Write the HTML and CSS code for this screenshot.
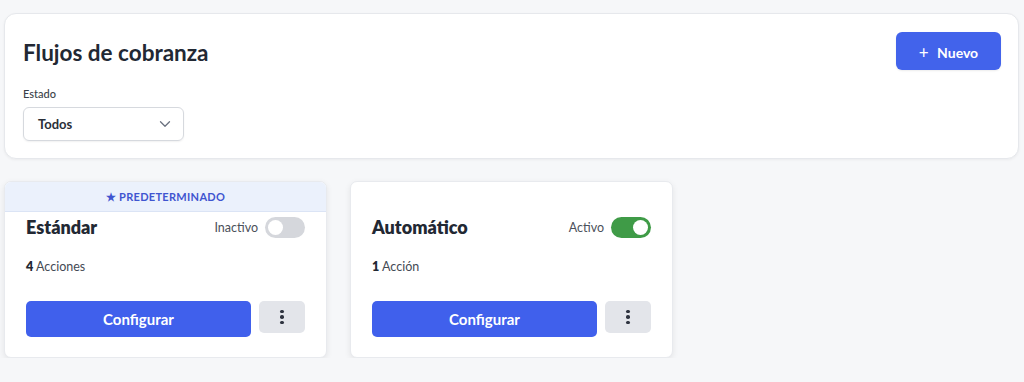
FILE: index.html
```html
<!DOCTYPE html>
<html lang="es">
<head>
<meta charset="utf-8">
<title>Flujos de cobranza</title>
<link rel="stylesheet" href="styles.css">
</head>
<body>
<div class="page">
  <section class="panel">
    <div class="panel-head">
      <h1 class="title">Flujos de cobranza</h1>
      <button class="btn-new"><span class="plus">+</span> Nuevo</button>
    </div>
    <label class="field-label">Estado</label>
    <div class="select">
      <span>Todos</span>
      <svg class="chev" width="12" height="8" viewBox="0 0 12 8"><path d="M1.5 1.8 6 6.2l4.5-4.4" fill="none" stroke="#6b7280" stroke-width="1.3" stroke-linecap="round" stroke-linejoin="round"/></svg>
    </div>
  </section>

  <div class="cards">
    <article class="card">
      <div class="badge">★ PREDETERMINADO</div>
      <div class="card-head">
        <h2 class="card-title">Estándar</h2>
        <div class="status">
          <span>Inactivo</span>
          <span class="toggle"><span class="knob"></span></span>
        </div>
      </div>
      <p class="count"><b>4</b> Acciones</p>
      <div class="actions">
        <button class="btn-config">Configurar</button>
        <button class="btn-more"><span class="dots"><i></i><i></i><i></i></span></button>
      </div>
    </article>

    <article class="card">
      <div class="card-head">
        <h2 class="card-title">Automático</h2>
        <div class="status">
          <span>Activo</span>
          <span class="toggle on"><span class="knob"></span></span>
        </div>
      </div>
      <p class="count"><b>1</b> Acción</p>
      <div class="actions">
        <button class="btn-config">Configurar</button>
        <button class="btn-more"><span class="dots"><i></i><i></i><i></i></span></button>
      </div>
    </article>
  </div>
</div>
</body>
</html>
```
FILE: styles.css
```css
* { box-sizing: border-box; }
html, body { margin: 0; padding: 0; }
body {
  background: #f6f7f9;
  font-family: Lato, "Noto Sans", sans-serif;
  color: #1f2430;
}
.page {
  padding: 13px 5px 0 4px;
}
.panel {
  background: #fff;
  border: 1px solid #e6e8ec;
  border-radius: 12px;
  box-shadow: 0 1px 3px rgba(0,0,0,0.05);
  padding: 18px 18px 18px 18px;
  height: 146px;
}
.panel-head {
  display: flex;
  justify-content: space-between;
  align-items: flex-start;
}
.title {
  margin: 10px 0 0 0;
  font-size: 22.5px;
  font-weight: 700;
  line-height: 1;
  color: #222833;
}
.btn-new {
  width: 105px;
  height: 38px;
  border: none;
  border-radius: 6px;
  background: #4263eb;
  color: #fff;
  font-family: inherit;
  font-size: 14px;
  font-weight: 700;
  margin-right: -1px;
  box-shadow: 0 1px 2px rgba(0,0,0,0.08);
}
.btn-new .plus { font-weight: 400; font-size: 17px; margin-right: 5px; position: relative; top: 1px; }
.field-label {
  display: block;
  margin-top: 17px;
  font-size: 11px;
  color: #3a3f48;
  font-weight: 500;
}
.select {
  margin-top: 7px;
  width: 161px;
  height: 34px;
  border: 1px solid #d6d9de;
  border-radius: 6px;
  box-shadow: 0 1px 2px rgba(0,0,0,0.06);
  display: flex;
  align-items: center;
  justify-content: space-between;
  padding: 0 12px 0 14px;
  font-size: 13px;
  font-weight: 700;
  color: #2a2f38;
}
.cards {
  display: flex;
  gap: 23px;
  margin-top: 22px;
}
.card {
  position: relative;
  width: 323px;
  height: 177px;
  background: #fff;
  border: 1px solid #e8eaee;
  border-radius: 7px;
  box-shadow: 0 2px 6px rgba(0,0,0,0.08);
  padding: 34px 21px 0 21px;
  overflow: hidden;
}
.badge {
  position: absolute;
  top: 0; left: 0; right: 0;
  height: 30px;
  background: #ebf1fc;
  border-bottom: 1px solid #dbe4f5;
  color: #3f55d0;
  font-size: 11px;
  font-weight: 700;
  letter-spacing: 0.3px;
  display: flex;
  align-items: center;
  justify-content: center;
}
.card-head {
  display: flex;
  justify-content: space-between;
  align-items: center;
  height: 22px;
}
.card-title {
  margin: 0;
  font-size: 18px;
  font-weight: 800;
  color: #222833;
}
.status {
  display: flex;
  align-items: center;
  gap: 7px;
  font-size: 12.5px;
  color: #4b505a;
}
.toggle {
  width: 40px;
  height: 21px;
  border-radius: 11px;
  background: #d5d7dc;
  position: relative;
  display: inline-block;
}
.toggle .knob {
  position: absolute;
  top: 3px; left: 3px;
  width: 15px; height: 15px;
  border-radius: 50%;
  background: #fff;
}
.toggle.on { background: #3f9b47; }
.toggle.on .knob { left: 22px; }
.count {
  margin: 21px 0 0 0;
  font-size: 12.5px;
  color: #444a54;
}
.count b { color: #222833; font-weight: 800; }
.actions {
  display: flex;
  align-items: flex-start;
  gap: 8px;
  margin-top: 27px;
}
.btn-config {
  width: 225px;
  height: 36px;
  border: none;
  border-radius: 5px;
  background: #4060ec;
  color: #fff;
  font-family: inherit;
  font-size: 15px;
  font-weight: 700;
}
.btn-more {
  width: 46px;
  height: 32px;
  border: none;
  border-radius: 5px;
  background: #e3e5ea;
  display: flex;
  align-items: center;
  justify-content: center;
}
.dots { display: flex; flex-direction: column; gap: 2px; }
.dots i { display: block; width: 3.5px; height: 3.5px; border-radius: 50%; background: #2f3440; }
```
